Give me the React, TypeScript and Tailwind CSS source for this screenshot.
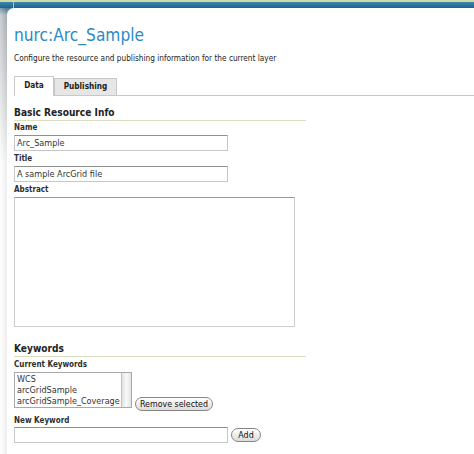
import React from "react";

function Label({ children, className = "" }: { children: React.ReactNode; className?: string }) {
  return (
    <div className={"text-[8px] leading-[12px] font-bold text-[#2e2e2e] " + className}>{children}</div>
  );
}

function Heading({ children, className = "" }: { children: React.ReactNode; className?: string }) {
  return (
    <div
      className={
        "w-[292px] border-b border-[#d9dfbf] text-[10.1px] leading-[14px] font-bold text-[#222] " + className
      }
    >
      {children}
    </div>
  );
}

function TextInput({ value, className = "" }: { value?: string; className?: string }) {
  return (
    <input
      readOnly
      defaultValue={value}
      className={
        "block h-[16px] w-[214px] border border-[#c6c6c6] border-t-[#8f8f8f] bg-white px-[2px] text-[9px] text-[#333] outline-none " +
        className
      }
    />
  );
}

function PillButton({ children, className = "" }: { children: React.ReactNode; className?: string }) {
  return (
    <button
      className={
        "flex h-[14px] items-center justify-center whitespace-nowrap rounded-full border border-[#858585] bg-linear-to-b from-white to-[#dcdcdc] px-0 text-[8.8px] leading-[12px] text-[#111] shadow-[inset_0_1px_0_#ffffff] " +
        className
      }
    >
      {children}
    </button>
  );
}

export default function App() {
  return (
    <div className="relative h-[454px] w-[474px] overflow-hidden bg-white font-['DejaVu_Sans_Condensed','Liberation_Sans',Arial,sans-serif]">
      {/* top bar */}
      <div className="h-[2px] bg-[#d2dba5]" />
      <div className="flex h-[6px] bg-linear-to-b from-[#3c87af] to-[#21628a]">
        <div className="w-[13px]" />
        <div className="w-px bg-[#a8c3d2]" />
      </div>

      <div className="flex bg-[linear-gradient(to_bottom,#4a7d99_0px,#b3bbc0_7px,#d3d6d8_70px,#ffffff_155px)]">
        <div className="w-[7px] shrink-0 bg-[linear-gradient(to_right,rgba(255,255,255,0.3),rgba(0,0,0,0.07))]" />
        <div className="h-[446px] flex-1 rounded-tl-[7px] bg-white pl-[7px] pt-[15px]">
          <h1 className="text-[17.2px] leading-[24px] text-[#2b8ac2]">nurc:Arc_Sample</h1>
          <p className="mt-[5px] text-[8.2px] leading-[12px] text-[#222]">
            Configure the resource and publishing information for the current layer
          </p>

          {/* tabs */}
          <div className="mt-[12px] flex h-[20px] items-end border-b border-[#c8c8c8]">
            <div className="mb-[-1px] flex h-[20px] w-[40px] justify-center border-x border-t border-[#c8c8c8] bg-white text-[8.2px] leading-[17px] font-bold text-[#222]">
              Data
            </div>
            <div className="flex h-[17px] w-[63px] justify-center border-x border-t border-[#c8c8c8] bg-[#e6e6e6] text-[8.2px] leading-[14px] font-bold text-[#222]">
              Publishing
            </div>
          </div>

          <Heading className="mt-[10px]">Basic Resource Info</Heading>

          <Label className="mt-[1px]">Name</Label>
          <TextInput value="Arc_Sample" className="mt-[1px]" />

          <Label className="mt-[2px]">Title</Label>
          <TextInput value="A sample ArcGrid file" className="mt-[1px]" />

          <Label className="mt-[2px]">Abstract</Label>
          <textarea
            readOnly
            className="mt-[1px] block h-[130px] w-[281px] resize-none border border-[#cdcdcd] border-t-[#9a9a9a] bg-white outline-none"
          />

          <Heading className="mt-[15px]">Keywords</Heading>

          <Label className="mt-[2px]">Current Keywords</Label>
          <div className="mt-[1px] flex items-start">
            <div className="flex h-[36px] w-[118px] border border-[#a9a9a9] bg-white">
              <div className="flex-1 overflow-hidden px-[2px] pt-px text-[9px] leading-[11px] whitespace-nowrap text-[#333]">
                <div>WCS</div>
                <div>arcGridSample</div>
                <div>arcGridSample_Coverage</div>
              </div>
              <div className="w-[10px] border-l border-[#c2c2c2] bg-[linear-gradient(to_right,#e2e2e2,#f9f9f9_50%,#e2e2e2)]" />
            </div>
            <PillButton className="mt-[25px] ml-[3px] w-[78px]">Remove selected</PillButton>
          </div>

          <Label className="mt-[4px]">New Keyword</Label>
          <div className="flex items-start">
            <TextInput />
            <PillButton className="mt-[1px] ml-[3px] w-[30px]">Add</PillButton>
          </div>
        </div>
      </div>
    </div>
  );
}
